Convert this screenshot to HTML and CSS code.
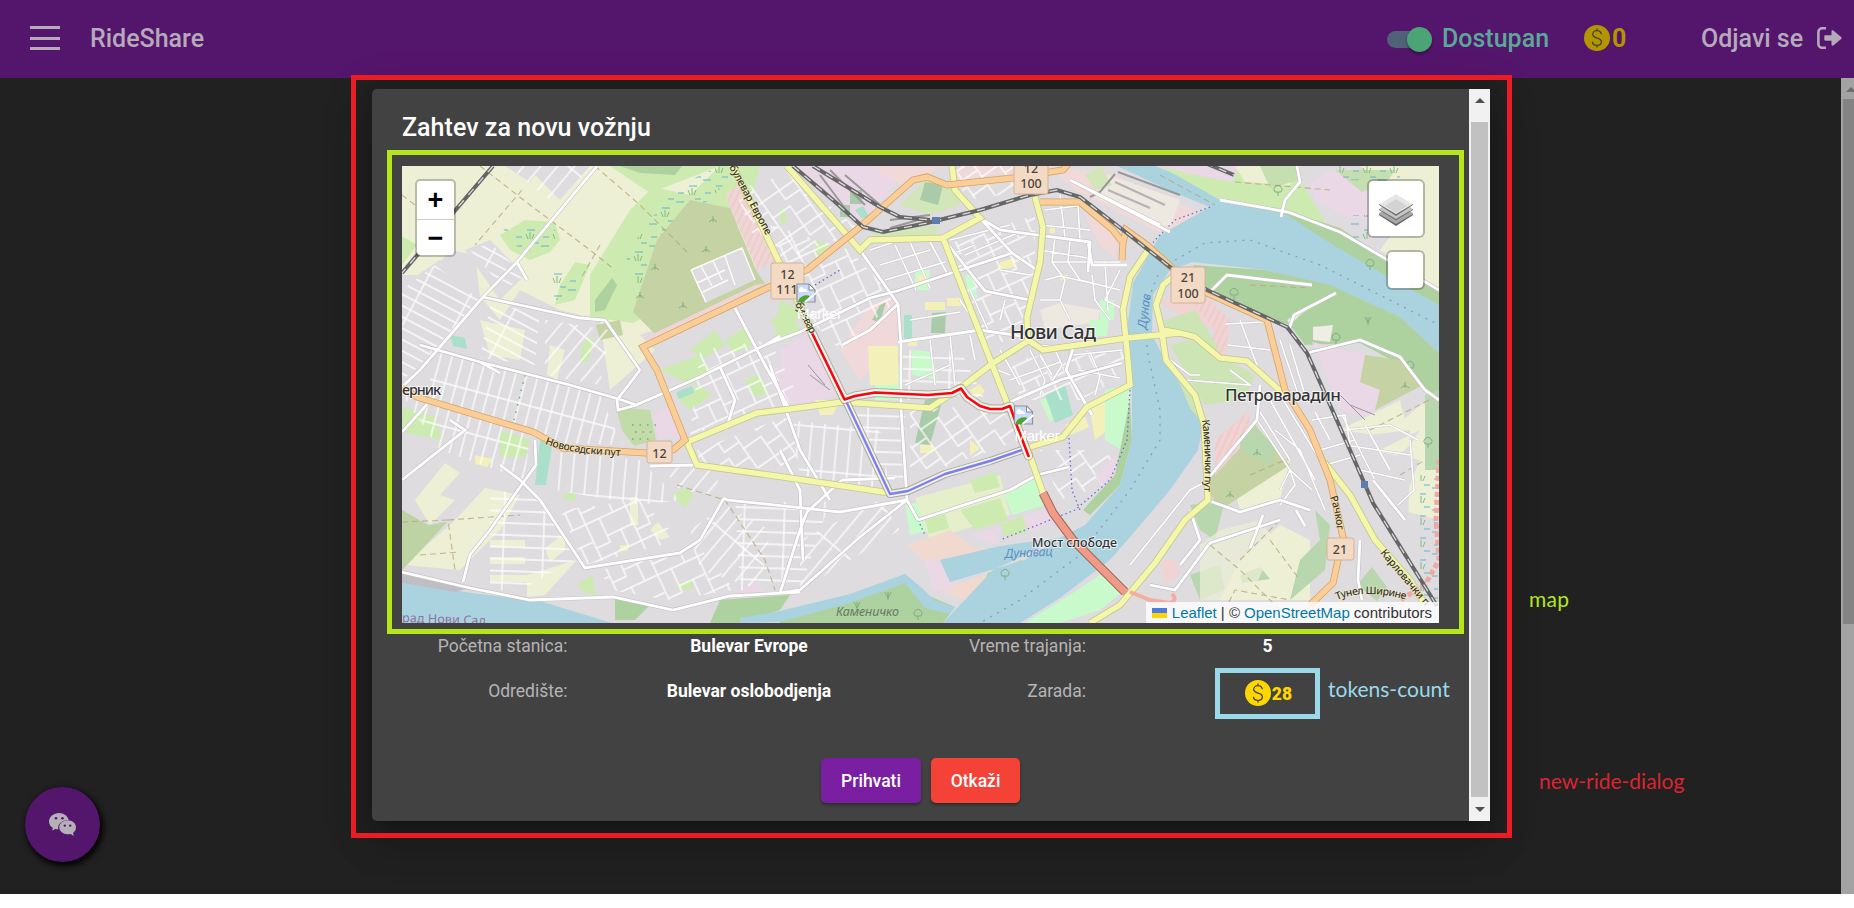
FILE: index.html
```html
<!DOCTYPE html>
<html lang="sr">
<head>
<meta charset="utf-8">
<title>RideShare</title>
<link rel="stylesheet" href="styles.css">
</head>
<body>
<div class="app">
  <header class="navbar">
    <div class="menu"><i></i><i></i><i></i></div>
    <div class="brand">RideShare</div>
    <div class="toggle"><span class="thumb"></span></div>
    <div class="status">Dostupan</div>
    <div class="tokens tokens-nav"><svg class="coin" viewBox="0 0 26 26"><use href="#coin"/></svg><b>0</b></div>
    <div class="logout">Odjavi se
      <svg class="logout-icon" viewBox="0 0 25 22"><path d="M9 1.3H5.2A3.8 3.8 0 0 0 1.4 5v12a3.8 3.8 0 0 0 3.8 3.8H9" fill="none" stroke="currentColor" stroke-width="2.6"/><path d="M8.5 8.2h6V4.4c0-1.2 1-1.5 1.8-.8l7.8 6.3c.7.6.7 1.5 0 2.1l-7.8 6.4c-.8.7-1.8.3-1.8-.8v-3.8h-6c-.8 0-1.2-.5-1.2-1.2V9.4c0-.7.4-1.2 1.2-1.2z" fill="currentColor"/></svg>
    </div>
  </header>
  <main class="page">
    <div class="chat"><svg viewBox="0 0 27 23"><path fill="currentColor" d="M10.3 0C4.600 0 0 3.800 0 8.400c0 2.700 1.500 5 3.900 6.500l-1 2.900 3.400-1.700c1 .3 1.900.4 3 .4C8.300 11.300 12.800 6.900 19.700 7 18.700 2.900 14.800 0 10.300 0z"/><path fill="currentColor" d="M27 14.300c0-3.800-3.800-7-8.300-7s-8.400 3.200-8.400 7 3.800 7 8.400 7c1 0 1.900-.2 2.900-.4l3.300 2-.9-2.900c1.800-1.300 3-3.300 3-5.700z"/><g class="eyes"><circle cx="7" cy="5.300" r="1.300"/><circle cx="13.500" cy="5.300" r="1.300"/><circle cx="15.800" cy="12.600" r="1.200"/><circle cx="21.200" cy="12.600" r="1.200"/></g></svg></div>
    <div class="scroll page-scroll"><span class="arrow up"></span><span class="bar"></span></div>
  </main>
</div>

<div class="overlay">
  <section class="dialog">
    <div class="content">
      <h2>Zahtev za novu vožnju</h2>
      <div class="map">
      <svg class="tiles" viewBox="402 166 1037 457">
        <defs>
          <g id="coin"><circle cx="13" cy="13" r="13" fill="currentColor"/><path class="dollar" d="M17.300 9.300c0-2.200-1.800-3.600-4.300-3.600S8.700 7.100 8.700 9.300c0 5 8.700 2.700 8.700 7.500 0 2.200-1.900 3.600-4.400 3.600s-4.500-1.400-4.500-3.700M13 3.500v2.200M13 20.400v2.200"/></g>
          <pattern id="g1" width="11" height="42" patternUnits="userSpaceOnUse" patternTransform="rotate(15)"><path d="M1 0V42M0 3H11" class="lane"/></pattern>
          <pattern id="g2" width="46" height="10" patternUnits="userSpaceOnUse" patternTransform="rotate(28)"><path d="M0 1H46M2 0V10" class="lane"/></pattern>
          <pattern id="g3" width="44" height="38" patternUnits="userSpaceOnUse" patternTransform="rotate(-25)"><path d="M0 1H44M1 0V38M16 1V20H44M31 20V38M0 27H16V20" class="lane"/></pattern>
          <pattern id="g4" width="13" height="44" patternUnits="userSpaceOnUse" patternTransform="rotate(5)"><path d="M1 0V44M0 2H13" class="lane"/></pattern>
          <pattern id="g5" width="40" height="12" patternUnits="userSpaceOnUse" patternTransform="rotate(2)"><path d="M0 1H40M2 0V12" class="lane"/></pattern>
          <pattern id="g6" width="39" height="43" patternUnits="userSpaceOnUse" patternTransform="rotate(-35)"><path d="M0 1H39M1 0V43M0 20H22V43M22 1V12H39M22 30H39" class="lane"/></pattern>
          <pattern id="g7" width="13" height="60" patternUnits="userSpaceOnUse" patternTransform="rotate(40)"><path d="M1 0V60M0 2H13" class="lane"/></pattern>
          <pattern id="hatch" width="6" height="6" patternUnits="userSpaceOnUse" patternTransform="rotate(25)"><path d="M1 0V6" stroke="#e9bcbc" stroke-width=".7"/></pattern>
          <pattern id="marsh" width="27" height="22" patternUnits="userSpaceOnUse"><path d="M1 4h8M14 10h8M3 17h6M20 1h6" stroke="#65b4d2" stroke-width="1.200"/><path d="M15 19l-2-5M17 19v-7M19 19l2-5" fill="none" stroke="#77b77b" stroke-width=".9"/></pattern>
          <g id="minor" fill="none">
            <path d="M597 166L517 262L483 297L420 370L402 387M483 297L520 305L580 318L605 320L640 370M517 262L527 280M420 345L480 362L570 385L622 400L636 405L700 377L720 367M480 362L500 373M720 367L735 400L726 430M735 308L765 365L790 410M720 367L765 345L800 332L870 298L897 291L1012 253M640 370L617 400L618 410L637 405M765 345L780 336M860 250L898 304L901 345V408L907 500L918 520M898 342L980 330L1027 337M980 218L1012 253L1040 272M980 218L1000 230L1090 242L1088 272M898 304L870 330L842 345M943 238L976 280L985 291L1030 300M1088 242L1092 265L1127 265M1010 402L1060 380L1122 363M1030 345L1073 349L1066 370L1092 415M918 520L1010 490L1037 475L1069 467M907 500L860 537L800 590L780 593M842 480L807 512L800 530L780 593M697 465L650 466M724 498L727 500L840 512L907 500M724 498L700 540L680 553L585 568L540 500L519 479L500 465M402 572L470 588L530 600L613 597L673 610L730 596L800 592M780 450L800 490L803 560M895 478L842 480M770 365L800 450L830 500"/>
            <path d="M535 440L536 465L520 487L490 530L470 555L463 582M402 432L440 390M402 480L465 430L450 420"/>
            <path d="M1070 180L1170 232M1070 180L1160 225M1220 200L1288 212L1340 232L1439 290M1281 217L1285 200L1300 182L1297 166M1288 332L1294 315L1336 293M1207 295L1227 275L1312 285M1307 353L1360 340L1400 357L1425 390L1439 400M1260 385L1257 420L1205 482M1190 510L1200 540L1180 565M1207 500L1240 512L1280 500L1310 510M1150 585L1175 590L1210 543L1280 520M1263 515L1250 548M1296 510L1305 526M1373 480L1405 520M1360 540L1358 580L1362 600"/>
          </g>
          <g id="streets" fill="none">
            <path d="M1130 565L1190 490L1205 482M1257 420L1290 470L1312 490M1410 440L1414 490L1398 505M1225 324L1264 322M1228 345L1270 350M1240 320L1258 368M1280 340L1300 400M1290 345L1305 395M1315 412L1330 440M1312 420L1345 415L1350 445M1345 430L1390 425L1418 440M1345 445L1410 455M1360 470L1405 480M1275 430L1300 450L1325 510M1280 490L1290 470L1295 485L1280 505M1260 412L1290 460M1170 360L1190 375L1200 375M1185 380L1250 385L1230 370M1270 400L1315 480M1280 395L1320 460M1320 450L1355 440M1325 465L1360 455M1342 415L1375 480M1365 425L1390 470"/>
            <path d="M1040 225L1090 230M1045 210L1085 205L1100 215M1060 195L1065 238M1078 205L1080 240M1040 250L1088 258M1055 237L1052 262L1065 280L1060 300M1070 240L1068 262L1080 280L1120 290M1052 262L1120 262M1045 280L1060 276L1100 285M1092 275L1095 300L1110 320M1040 300L1060 300L1070 320M1105 262L1108 310M1120 270L1105 300L1125 310M1040 355L1052 375M1055 350L1062 365L1050 385M1010 380L1060 362M1030 350L1045 380L1040 395M1073 355L1122 350M1078 370L1120 378M1090 352L1100 376L1095 395M1000 350L1020 385M985 365L1010 375"/>
            <path d="M870 250L900 240M880 265L930 250M885 280L945 262M892 294L955 270M910 242L930 288M895 245L916 290M930 242L948 275M950 255L975 245M960 300L980 330M910 320L960 312M930 340L935 385M950 335L955 385M970 335L975 360M905 385L950 365M1000 270L1030 275M1005 300L1000 320M970 290L988 330M950 240L1010 225M965 255L1020 232"/>
          </g>
          <g id="yellow" fill="none">
            <path d="M733 166L770 243L812 332L844 400M787 166L860 250L870 240L943 238L980 218L955 190L952 166M943 238L1007 403L1028 450L1043 493M1035 197L1043 227L1040 262L1027 317L1028 340L1043 350L1127 338L1180 333L1195 337L1220 358L1247 361L1285 395M1028 341L993 363L963 386L930 408L843 402L790 409L757 413L687 442L697 465L790 478L890 493M1030 447L1063 437L1087 407L1130 385L1127 350L1123 310L1130 277L1150 247M1180 333L1162 330L1156 305L1163 285L1175 275M1162 333L1166 360L1195 395L1204 425L1208 500L1185 520L1155 563L1120 605L1090 623M1324 462L1350 495L1375 540L1410 580L1425 605"/>
          </g>
          <g id="orange" fill="none"><path d="M402 388L417 397L533 432L563 448L647 453L673 450L685 440L657 370L643 347L763 290L807 270L860 227L913 180L927 177L947 185L1013 178L1063 170L1070 162M1040 202L1080 202L1113 230L1123 243L1122 260M1123 243L1126 230L1147 245L1180 275L1207 293L1267 320L1285 390L1310 430L1330 480L1343 537L1333 583L1310 605"/></g>
          <g id="rail" fill="none"><path d="M493 166L402 273M793 166L833 200L863 227L883 232L927 223L980 210L1030 195L1057 190L1080 197L1123 230L1170 267L1207 290L1287 327L1307 353L1350 450L1373 503L1437 606M813 166L880 207L900 217L930 220M1205 163L1234 175"/></g>
        </defs>
        <rect x="402" y="166" width="1037" height="457" fill="#dedcdf"/>
        <!-- farmland and woods, north-west -->
        <path fill="#edf0d5" d="M402 166H735L760 260L740 300L640 335L655 350L610 390L600 320L560 310L520 290L500 320L480 296L475 255L450 250L430 275L402 275z"/>
        <path fill="#dedcdf" d="M505 166H590L560 200L535 175L530 182zM465 250L490 240L525 275L500 300zM402 285L440 260L480 295L470 330L402 380z"/>
        <path fill="#cdebb0" d="M590 275L630 210L653 187L690 195L720 166H760L750 205L690 290L633 323L590 317zM500 235L525 220L555 222L560 240L550 252L530 260L510 250zM560 285L575 262L590 265L575 300L555 305zM610 166H720L650 193zM402 236L417 245L402 265z"/>
        <path fill="url(#marsh)" d="M625 255L665 200L690 180L720 166H740L710 200L690 210L665 265L640 290zM500 225H555V250H520zM550 270H580L575 300H552z"/>
        <path fill="#aed1a0" d="M620 166H682L675 175L640 173zM595 300L612 278L617 285L605 310L595 312z"/>
        <path fill="#c5d2a3" d="M690 200L730 208L757 272L766 285L655 334L633 312L657 240zM596 325L620 320L623 335L600 340z"/>
        <path fill="#dedcdf" d="M691 270L742 248L755 280L705 303z"/>
        <path class="lane" d="M691 270L742 248L755 280M691 270L706 302M701 266L712 286M713 261L722 280M697 283L725 270M703 292L728 280M725 256L735 285"/>
        <path fill="#efd5d5" d="M725 195L738 185L775 262L757 270zM655 333L755 285L768 283L640 345z"/>
        <path fill="url(#hatch)" d="M725 195L738 185L775 262L757 270z"/>
        <!-- industry and retail -->
        <path fill="#ead8e7" d="M795 166H905L880 205L860 225zM652 415L675 402L686 435L660 440zM780 350L805 335L843 395L790 405zM766 375L790 365L805 398L785 407z"/>
        <path fill="#f1d9d9" d="M870 166H945L927 174L900 185zM870 305L897 295V345L860 380L840 350zM1050 166L1115 175L1205 215L1170 238L1075 190zM960 166L1063 166L955 180zM1085 215L1105 225L1118 240L1115 258L1100 245z"/>
        <path fill="#ede8e0" d="M1108 175L1180 200L1170 228L1095 198zM1040 310L1060 303L1100 310L1098 322L1045 330z"/>
        <path fill="#d2e6b9" d="M900 205L925 180L955 187L960 205L930 215zM870 232L940 225L935 238L880 238zM1085 175L1100 166L1112 185L1095 190z"/>
        <path fill="#aacbaa" d="M925 182L943 185L938 205L920 200zM880 305L886 302L880 322L872 320zM932 313L946 312L945 333L931 333zM925 400L943 398L930 445L915 443zM850 190h12v14h-12zM840 205h10v12h-10z"/>
        <path fill="#c8facc" d="M915 270h15v20h-15zM965 275L972 275L978 300L968 292zM912 350L932 352L937 380L912 375zM875 365h25v35h-25zM1089 320h20l-2 16h-16zM1100 300h14v20h-14zM1040 400L1060 395L1065 410L1050 422zM1003 490L1040 477L1045 505L1012 515zM905 505L930 500L932 530L910 535z"/>
        <path fill="#f3f1b9" d="M868 346H898V385H870zM925 302h20v8h-20zM1000 262L1015 258V267L998 270zM815 400H840L833 415H820zM1090 410L1110 395L1125 390L1120 420L1095 440zM920 445h13v8h-13zM970 440l10 8-10 8zM918 275h10v10h-10zM947 298h14v8h-14zM908 340h9v6h-9zM1050 228h5v5h-5zM1060 275h8v5h-8zM970 390l10-6 5 8-10 6zM1065 425l20-8 4 10-18 8zM475 455l18 4-6 8-12-3zM620 545h8v6h-8z"/>
        <path fill="#cdebb0" d="M780 300L800 310L790 340L775 335zM690 350L715 330L725 345L705 358zM660 370L700 355L710 372L690 385zM770 320L790 308L800 330L785 340zM675 395L700 385L712 395L690 410zM725 340l20-12 10 16-20 10zM745 380l15-6 8 18-12 6zM780 205l8 15-8 5zM817 240l12 5-5 12-10-4z"/>
        <path fill="#aae0cb" d="M676 392l16-6 2 7-15 6zM450 335l15 3 2 11-14-3zM540 440H553L546 485H535zM855 210l8-4 6 10-7 3zM904 315h8v26h-8zM1045 395l20-10 8 30-18 8z"/>
        <path fill="#c2dba8" d="M616 407L650 410L656 440L634 446L622 430z"/>
        <path fill="#edf0d5" d="M415 500L445 463L460 473L440 495L455 500L430 525zM405 565L455 520L485 488L520 495L500 530L470 560L460 570zM527 575L577 560L545 595L527 597zM545 548L565 533L565 550L550 562zM630 497h8v28h-8zM650 530l8-8 12 15-10 3zM490 540h35v7h-35zM490 557h35v7h-35zM490 575h38v7h-38zM480 320l45 10-5 30-30-5zM550 345l15 5-8 30-10-5z"/>
        <path fill="#cdebb0" d="M402 407L435 417L442 440L402 432zM500 430L530 440L525 457H500zM672 495l15-8 6 8-8 13zM564 493h12v7h-12zM577 585l15-10 4 20-10-2zM677 585l15-5 1 8-12 3zM582 345l8-8 4 3-6 22-8 0z"/>
        <path fill="#bdd3a4" d="M402 510L428 525L447 522L410 562L402 570z"/>
        <path fill="#ead8e7" d="M738 590l20-8 5 10-22 10zM770 366l14 4v15z"/>
        <!-- street grids -->
        <path fill="url(#g1)" d="M430 350L480 362L600 395L622 445L560 443L430 398zM402 395L530 435L525 480L440 450z"/>
        <path fill="url(#g2)" d="M402 290L435 265L480 300L415 370L402 380zM490 305L540 312L535 365L480 358zM470 250L490 243L525 275L505 290z"/>
        <path fill="url(#g7)" d="M508 166H592L555 205zM545 320L610 330L600 385L545 375z"/>
        <path fill="url(#g4)" d="M555 452L640 460L680 500L640 505L555 490zM790 420L880 430L890 490L800 475z"/>
        <path fill="url(#g5)" d="M855 408H905V485H880zM900 350H960L985 400H905zM490 490L540 495L575 560L520 590L490 590zM735 502H830L800 590H740z"/>
        <path fill="url(#g3)" d="M770 225L850 250L897 300L840 350L800 310zM945 245L1035 215L1035 270L1020 330L990 350zM1010 360L1070 352L1125 350V375L1080 400L1020 400zM700 350L770 340L800 400L690 435zM560 510L640 500L680 540L585 565zM600 570L700 548L735 590L670 600L610 590z"/>
        <path fill="url(#g6)" d="M910 410L1000 405L1020 440L910 480zM697 450L790 415L800 470L700 465zM785 170L860 230L840 245L800 220zM955 166H1035V190L965 200zM1040 450H1110L1120 480L1060 500zM735 190L785 175L835 235L790 265L755 240z"/>
        <path fill="url(#g7)" d="M690 530L725 505L770 530L760 590L700 570zM660 465L720 470L715 495L680 490zM800 540L880 500L900 530L800 590z"/>
        <!-- parks south of the centre -->
        <path fill="#e5efca" d="M915 498L1000 475L1010 515L930 540z"/>
        <path fill="#cdebb0" d="M960 510L1000 498L1008 520L975 530zM925 520l20-6 4 14-20 6zM970 480l25-8 5 15-25 6zM1000 525l24-10 3 18-22 3z"/>
        <path fill="#f1d9d0" d="M908 545L950 530L975 548L1010 550L925 562zM940 590L985 575L990 585L965 600z"/>
        <path fill="#ead8e7" d="M925 560L980 557L950 590L933 590zM970 535L1002 527L995 545zM1023 516L1050 508L1053 523L1027 532zM1095 475L1115 455L1120 475L1105 490z"/>
        <path fill="#aed1a0" d="M780 612L850 600L905 578L920 592L955 607L943 623H780zM988 573L1022 560L1020 580H985z"/>
        <path fill="#c8facc" d="M1025 623L1065 598L1100 575L1125 590L1100 610L1060 623zM1105 390L1130 385V430L1122 450L1105 440z"/>
        <path fill="#aed1a0" d="M1130 400L1132 440L1120 485L1090 515L1083 510L1115 475zM720 600L790 595L780 610L740 623H710zM615 597L650 605L635 620H615z"/>
        <!-- water -->
        <path fill="#aad3df" d="M1117 166L1180 195L1210 207L1160 235L1133 283L1127 330L1132 385L1132 440L1120 485L1085 525L1040 548L993 570L943 623H1020L1060 598L1110 560L1130 537L1170 490L1198 450L1203 425L1190 400L1165 360L1152 335L1153 295L1170 270L1193 262L1265 270L1333 287L1400 317L1439 353V305L1400 283L1333 243L1287 213L1220 200L1190 180L1155 166zM402 583L480 594L540 601L612 623H402zM940 560L1000 546L1060 538L1025 560L950 582zM780 611L850 594L905 574L922 588L935 601L955 607L950 614L925 608L905 583L850 603L780 622L740 623V618z"/>
        <path fill="#bfbfc3" d="M402 573L470 588L455 592L402 583z"/>
        <!-- right bank -->
        <path fill="#cdebb0" d="M1160 166H1240L1300 180L1330 230L1439 288V305L1333 240L1287 213L1220 200z"/>
        <path fill="#aed1a0" d="M1218 198L1290 212L1340 228L1439 292V305L1390 278L1333 245L1287 215zM1193 265L1265 270L1330 285L1400 317L1439 353V410L1410 370L1360 343L1305 345L1290 325L1207 295z"/>
        <path fill="#ead8e7" d="M1160 166H1240L1232 182L1195 175zM1310 185L1330 170L1366 180L1368 220L1350 218L1315 200zM1312 342L1365 355L1360 382L1380 390L1372 420L1340 410z"/>
        <path fill="#edf0d5" d="M1360 166H1439V290L1380 250L1410 210zM1235 166H1300L1290 185L1245 182zM1220 600L1240 560L1280 525L1310 540V600zM1235 490L1260 475L1290 460L1280 500L1240 510zM1370 450L1420 405L1439 400V520L1400 510L1420 460zM1340 430L1400 400L1410 440z"/>
        <path fill="#c5dfb0" d="M1335 170h60l-8 12-25 10zM1260 166H1297L1300 180L1270 188z"/>
        <path fill="url(#marsh)" d="M1335 166H1400V182L1345 180zM1350 215H1368V240H1350zM1420 475H1438V605H1420z"/>
        <path fill="#c5d2a3" d="M1365 355L1400 360L1423 385L1375 410L1380 390L1360 382zM1205 485L1255 425L1290 465L1220 510z"/>
        <path fill="#dedcdf" d="M1227 320L1265 325L1275 380L1240 362L1228 350zM1110 570L1170 490L1200 455L1210 500L1185 545L1160 580L1130 570zM1260 390L1300 400L1325 470L1370 480L1410 445L1420 430L1360 460L1310 420L1290 410zM1330 440L1410 430L1408 540L1380 600L1340 590L1350 540z"/>
        <path fill="#f1d3d3" d="M1155 300L1205 295L1230 320L1225 360L1210 350L1215 330L1180 315zM1215 440L1250 410L1248 440L1215 475zM1160 560h15l5 15-15 10z"/>
        <path fill="url(#hatch)" d="M1190 300L1205 295L1230 320L1225 360L1210 350L1215 330zM1215 440L1250 410L1248 440L1215 475z"/>
        <path fill="#cde5b5" d="M1165 320L1195 310L1220 350L1165 330zM1170 345L1190 340L1255 375L1245 400L1205 405zM1170 360l25 30 5 30-10-12z"/>
        <path fill="#b9d7ae" d="M1240 435L1255 428L1275 445L1270 465L1240 450zM1425 395L1439 390V470H1425zM1190 505L1225 500L1215 540L1200 530zM1290 600L1300 560L1320 540L1315 510L1330 525L1325 570zM1190 575l30-10 5 25-25 10zM1240 575l20-8 10 12-28 4zM1357 585l15-18 15 20-10 14z"/>
        <path fill="#f0ece6" d="M1313 327l20-2-3 17-17-2zM1287 320L1330 295L1300 315L1290 325z"/>
        <path fill="#edf0d5" d="M1200 545l20-15 40-10 15 20-25 60h-50z" opacity=".7"/>
        <!-- field tracks, ferry lines, trees -->
        <g class="track"><path d="M402 195L415 205M480 166L530 205L590 250L615 270M595 166L640 205L690 255M522 190L475 245M600 245L580 280M402 522L448 520L455 570M448 520L520 515M420 555L460 552M1160 175L1215 205M1235 182L1330 190M1210 545L1240 570L1280 610M1240 560L1280 520M1270 540L1300 580M1250 475L1290 458M1370 430L1439 395M1250 285L1310 288M1400 475L1425 460M677 485L725 500L765 560L775 590M1220 620L1235 590L1290 600"/></g>
        <g class="ferry"><path d="M1175 260L1205 243L1250 240L1320 265L1380 295L1439 325M1158 275L1148 300L1147 350L1160 410L1160 440L1130 490L1080 555L1020 600L980 623"/></g>
        <g class="cycle"><path d="M1210 207L1175 220L1155 240L1133 270L1125 310M1130 390L1127 440L1110 480L1075 510L1000 540M1069 438L1072 490L1080 510M918 520L925 535M815 285L840 270"/></g>
        <g fill="none" stroke="#7ca97e" stroke-width=".9"><path d="M713 222v-6m-4 6l4-3 4 3M655 270v-6m-4 6l4-3 4 3M706 252v-6m-4 6l4-3 4 3M640 298v-6m-4 6l4-3 4 3M683 308v-6m-4 6l4-3 4 3M1234 302v-6m-3-1a4 4 0 1 1 6 0zM1368 325v-8m-3 0l3 6 3-6M1336 344v-4m-3 0a4 4 0 1 1 6 0zM1410 372v-4m-3 0a4 4 0 1 1 6 0zM1278 196v-4m-3 0a4 4 0 1 1 6 0zM1370 270v-4m-3 0a4 4 0 1 1 6 0zM857 610v-8m-3 0l3 6 3-6M888 600v-8m-3 0l3 6 3-6M918 620v-4m-3 0a4 4 0 1 1 6 0zM1005 580v-4m-3 0a4 4 0 1 1 6 0zM1257 455v-6m-4 6l4-3 4 3M1230 497v-6m-4 6l4-3 4 3M1405 388v-6m-4 6l4-3 4 3M1428 448v-4m-3 0a4 4 0 1 1 6 0z"/></g>
        <path d="M632 425h26M635 432h22M632 439h22M525 375L514 420" stroke="#68b36b" stroke-width="1.500" stroke-dasharray="1.500 6"/>
        <path d="M1350 405L1375 415M1340 395L1365 420M808 365L825 385M810 375L830 390" stroke="#999" stroke-width="1"/>
        <path d="M820 175L850 215M830 170L865 205M845 175L880 205M890 220L930 215M890 228L925 218M1115 174L1100 192L1090 197M1118 172L1180 195" stroke="#999" stroke-width="2" fill="none"/>
        <path d="M1115 182L1165 205M1108 190L1150 208" stroke="#b5b2b2" stroke-width="2" fill="none"/>
        <!-- roads -->
        <use href="#streets" stroke="#c9c6c9" stroke-width="2.500"/>
        <use href="#streets" stroke="#fff" stroke-width="1.600"/>
        <use href="#minor" stroke="#c4c1c4" stroke-width="4"/>
        <use href="#minor" stroke="#fff" stroke-width="2.800"/>
        <use href="#yellow" stroke="#c3c78c" stroke-width="7"/>
        <use href="#yellow" stroke="#f4f6aa" stroke-width="5.400"/>
        <use href="#orange" stroke="#d6a368" stroke-width="7"/>
        <use href="#orange" stroke="#fbce98" stroke-width="5.400"/>
        <path d="M1043 493L1053 513L1073 540L1125 592" fill="none" stroke="#a2675a" stroke-width="9"/>
        <path d="M1043 493L1053 513L1073 540L1126 593" fill="none" stroke="#ef9b87" stroke-width="7"/>
        <path d="M1439 460L1436 520L1439 560L1425 585L1400 600" fill="none" stroke="#f0a8a0" stroke-width="5" stroke-dasharray="5 3"/>
        <path d="M1130 592L1150 600L1170 603Q1178 600 1172 594" fill="none" stroke="#f4ada1" stroke-width="4"/>
        <use href="#rail" stroke="#666" stroke-width="4"/>
        <use href="#rail" stroke="#ddd" stroke-width="1.300" stroke-dasharray="8 7"/>
        <path fill="#5f7cae" d="M932 217h8v7h-8zM1361 481h7v7h-7z"/>
        <!-- alternative and chosen route -->
        <g fill="none" stroke-linejoin="round" stroke-linecap="round">
          <path d="M846 401L890 494L908 491L945 474L990 461L1022 450" stroke="#8b8f70" stroke-width="8" opacity=".65"/>
          <path d="M846 401L890 494L908 491L945 474L990 461L1022 450" stroke="#f3f1ef" stroke-width="6"/>
          <path d="M846 401L890 494L908 491L945 474L990 461L1022 450" stroke="#7d80eb" stroke-width="2.400"/>
          <path d="M812 333L844.500 399.500L855 396L875 392.500L928 395L952 393L961 388.500L967 397L980 406L990 409H1002L1010 406L1017 426L1028.500 456" stroke="#8b8f70" stroke-width="9" opacity=".6"/>
          <path d="M812 333L844.500 399.500L855 396L875 392.500L928 395L952 393L961 388.500L967 397L980 406L990 409H1002L1010 406L1017 426L1028.500 456" stroke="#f7f3f0" stroke-width="7"/>
          <path d="M812 333L844.500 399.500L855 396L875 392.500L928 395L952 393L961 388.500L967 397L980 406L990 409H1002L1010 406L1017 426L1028.500 456" stroke="#f5050d" stroke-width="2.600"/>
        </g>
        <!-- road shields -->
        <g class="shield"><rect x="771" y="263" width="33" height="36" rx="2"/><rect x="1014" y="155" width="34" height="39" rx="2"/><rect x="1171" y="267" width="34" height="36" rx="2"/><rect x="647" y="441" width="25" height="22" rx="2"/><rect x="1327" y="538" width="27" height="22" rx="2"/></g>
        <g class="shield-text"><text x="787.500" y="279">12</text><text x="787" y="293.500">111</text><text x="1031" y="173">12</text><text x="1031" y="188">100</text><text x="1188" y="282">21</text><text x="1188" y="297.500">100</text><text x="659.500" y="457.500">12</text><text x="1340" y="554">21</text></g>
        <!-- place names -->
        <g class="place"><text x="1010" y="339" font-size="19.500" textLength="86">Нови Сад</text><text x="1225" y="401" font-size="17" textLength="116">Петроварадин</text><text x="402" y="395" font-size="14.500" textLength="39">ерник</text><text x="1032" y="546.500" font-size="12.500" textLength="85">Мост слободе</text></g>
        <g class="water-name"><text transform="translate(1146 329) rotate(-82)" textLength="35">Дунав</text><text x="1005" y="558" transform="rotate(-3 1005 558)" textLength="48">Дунавац</text></g>
        <text class="water-name nature" x="836" y="616" textLength="63">Каменичко</text>
        <text class="admin" x="402" y="622" textLength="84" transform="rotate(2 402 622)">рад Нови Сад</text>
        <path id="n1" d="M545 444Q570 454 622 456" fill="none"/><path id="n2" d="M729 167L768 239" fill="none"/><path id="n3" d="M1202 420Q1207 460 1203 502" fill="none"/><path id="n4" d="M1380 553L1428 610" fill="none"/><path id="n5" d="M1330 497Q1338 520 1337 540" fill="none"/><path id="n6" d="M1337 600Q1365 588 1407 600" fill="none"/>
        <g class="road-name"><text><textPath href="#n1" textLength="77">Новосадски пут</textPath></text><text><textPath href="#n2" textLength="78">булевар Европе</textPath></text><text><textPath href="#n3" textLength="72">Каменички пут</textPath></text><text><textPath href="#n4" textLength="70">Карловачки п</textPath></text><text><textPath href="#n5" textLength="34">Рачког</textPath></text><text><textPath href="#n6" textLength="70">Тунел Ширине</textPath></text><text transform="translate(795 304) rotate(63)" textLength="34">булевар</text></g>
        <g id="marker"><path fill="#c9dbfa" stroke="#919191" stroke-width="1.200" d="M797 284h12l6 6v12h-18z"/><path fill="#fff" d="M799 289c2-3 4-2 5 0 3 0 4 2 3 3h-8z"/><path fill="#4ca52f" d="M798 302c1-6 8-8 12-6l-5 6z"/><path stroke="#fff" stroke-width="2" d="M805 302l11-9"/><path fill="#fff" stroke="#888" d="M809 284v6h6z"/><text class="alt" x="797" y="319" textLength="45">Marker</text></g>
        <use href="#marker" x="217.500" y="122"/>
      </svg>
      <div class="zoom"><span>+</span><span>−</span></div>
      <div class="layers"><svg viewBox="0 0 34 34"><path fill="#a9a9a9" d="M0 23l17 10 17-10v-2L17 12 0 21z"/><path fill="#666" d="M0 22l17 10 17-10v1L17 34 0 23z"/><path fill="#c5c5c5" d="M0 17l17 10 17-10L17 6z"/><path fill="#777" d="M0 17l17 10 17-10v1L17 28.500 0 18z"/><path fill="#e6e6e6" d="M0 12.500L17 2l17 10.500L17 23z"/><path fill="#d3d3d3" d="M6 14L17 7l11 7-11 7z"/><path fill="#777" d="M0 12l17 10 17-10v1L17 24 0 13z"/></svg></div>
      <div class="blank-control"></div>
      <div class="credit"><svg viewBox="0 0 15 10"><path fill="#4c7be1" d="M0 0h15v5H0z"/><path fill="#ffd500" d="M0 5h15v5H0z"/></svg><a>Leaflet</a> | © <a>OpenStreetMap</a> contributors</div>
      </div>
      <div class="details">
        <span class="label">Početna stanica:</span><b class="value">Bulevar Evrope</b><span class="label">Vreme trajanja:</span><b class="value">5</b>
        <span class="label">Odredište:</span><b class="value">Bulevar oslobodjenja</b><span class="label">Zarada:</span><b class="value"><span class="tokens tokens-ride"><svg class="coin" viewBox="0 0 26 26"><use href="#coin"/></svg><b>28</b></span></b>
      </div>
      <div class="actions"><button class="accept">Prihvati</button><button class="reject">Otkaži</button></div>
    </div>
    <div class="scroll dialog-scroll"><span class="arrow up"></span><span class="bar"></span><span class="arrow down"></span></div>
  </section>
</div>

<div class="frame frame-dialog"></div>
<div class="frame frame-map"></div>
<div class="frame frame-tokens"></div>
<div class="note note-map">map</div>
<div class="note note-tokens">tokens-count</div>
<div class="note note-dialog">new-ride-dialog</div>
</body>
</html>
```
FILE: styles.css
```css
* { box-sizing: border-box; }
body { margin: 0; height: 908px; overflow: hidden; background: #fff; font-family: Roboto, "Liberation Sans", sans-serif; position: relative; }
.app { height: 894px; display: flex; flex-direction: column; background: #212121; }
.navbar { height: 78px; flex: none; display: flex; align-items: center; padding: 0 12px 0 30px; background: #54156c; color: #b5aab9; font-size: 25px; font-weight: 500; line-height: 78px; }
.menu { width: 30px; height: 24px; display: flex; flex-direction: column; justify-content: space-between; margin-top: -2px; }
.menu i { height: 3px; background: #b5aab9; }
.brand { margin: 0 auto 0 30px; }
.toggle { width: 45px; height: 17px; border-radius: 9px; display: flex; align-items: center; justify-content: flex-end; background: linear-gradient(90deg, #50627a 42px, transparent 42px); }
.thumb { width: 25px; height: 25px; border-radius: 50%; background: #4aa476; box-shadow: 0 2px 3px rgba(0,0,0,.35); }
.status { color: #5ba898; margin-left: 10px; width: 109px; }
.tokens { display: flex; align-items: center; }
.coin { width: 26px; height: 26px; display: block; }
.dollar { fill: none; stroke: #424242; stroke-width: 1.3; }
.tokens-nav { margin-left: 33px; width: 117px; color: #b39500; }
.tokens-nav .coin { margin-top: -2px; }
.tokens-nav b { margin-left: 2px; font-weight: 700; }
.tokens-nav .dollar { stroke: #54156c; }
.logout { display: flex; align-items: center; justify-content: space-between; width: 141px; }
.logout-icon { width: 25px; height: 22px; margin-top: -2px; }
.page { flex: 1; display: flex; justify-content: space-between; min-height: 0; }
.chat { margin: auto 0 32px 25px; width: 75px; height: 75px; border-radius: 50%; background: #54156c; color: #b5b0b8; display: flex; align-items: center; justify-content: center; box-shadow: 2px 3px 6px 1px #000; }
.chat svg { width: 27px; height: 23px; }
.eyes { fill: #54156c; }
.scroll { display: flex; flex-direction: column; align-items: center; }
.arrow { width: 0; height: 0; border: 5px solid transparent; }
.up { border-top: 0; border-bottom-color: #505050; }
.down { border-bottom: 0; border-top-color: #505050; }
.page-scroll { width: 13px; background: #a3a3a3; padding-top: 9px; align-items: flex-end; overflow: hidden; }
.page-scroll .bar { width: 11px; height: 525px; margin-top: 7px; background: #838383; }
.page-scroll .up { border-bottom-color: #6b6b6b; margin-right: -2px; }
.overlay { position: absolute; inset: 0 0 14px; overflow: hidden; display: flex; align-items: flex-start; padding: 89px 0 0 372px; }
.dialog { width: 1118px; height: 732px; display: flex; background: #424242; border-radius: 5px 0 0 5px; color: #fff; box-shadow: 0 11px 15px -7px rgba(0,0,0,.2), 0 24px 38px 3px rgba(0,0,0,.14), 0 9px 46px 8px rgba(0,0,0,.12); }
.content { width: 1097px; padding: 20px 30px 0; }
.dialog-scroll { width: 21px; padding: 9px 0; background: #f1f1f1; justify-content: space-between; }
.dialog-scroll .bar { width: 17px; height: 675px; margin-top: 9px; background: #c1c1c1; }
h2 { margin: 0 0 21px; height: 36px; font-size: 25px; line-height: 37px; font-weight: 500; letter-spacing: .03px; }
.map { width: 1037px; height: 457px; position: relative; overflow: hidden; }
.tiles { width: 1037px; height: 457px; display: block; font-family: "Noto Sans", sans-serif; }
.lane { fill: none; stroke: #fff; stroke-width: 1.4; opacity: .9; }
.track { fill: none; stroke: #b9a675; stroke-width: 1.1; stroke-dasharray: 6 4; opacity: .8; }
.ferry { fill: none; stroke: #8aa0bb; stroke-width: 1.4; stroke-dasharray: 2 6; }
.cycle { fill: none; stroke: #6a6ad8; stroke-width: 1.3; stroke-dasharray: 1.5 3; }
.shield rect { fill: #f3dac4; stroke: #d3b298; stroke-width: 1; }
.shield-text { font-size: 12.5px; text-anchor: middle; fill: #4c443d; font-weight: 500; }
.place { fill: #333; stroke: #fff; stroke-opacity: .7; stroke-width: 2px; paint-order: stroke; font-weight: 500; }
.water-name { fill: #5f8fc4; font-size: 12.5px; font-style: italic; }
.nature { fill: #667a62; }
.admin { fill: #8f72a3; font-size: 12.5px; }
.road-name { fill: #3b3630; font-size: 10.5px; font-weight: 500; stroke: #f5f1c0; stroke-opacity: .6; stroke-width: 1.5px; paint-order: stroke; }
.alt { fill: #fff; font-family: "Liberation Sans", sans-serif; font-size: 15px; }
.zoom { position: absolute; left: 13px; top: 13px; width: 41px; height: 78px; border: 2px solid rgba(0,0,0,.22); background-clip: padding-box; border-radius: 5px; display: flex; flex-direction: column; background-color: #fff; }
.zoom span { flex: 1; font: bold 27px/38px "Liberation Sans", sans-serif; text-align: center; color: #000; }
.zoom span + span { border-top: 1px solid #ccc; line-height: 36px; }
.layers, .blank-control { position: absolute; right: 14px; background: #fff; background-clip: padding-box; border: 2px solid rgba(0,0,0,.24); border-radius: 6px; }
.layers { top: 13px; width: 58px; height: 59px; display: flex; align-items: center; justify-content: center; }
.layers svg { width: 34px; height: 34px; }
.blank-control { top: 84px; width: 39px; height: 40px; }
.credit { position: absolute; right: 0; bottom: 0; height: 21px; width: 293px; padding: 0 7px 0 0; background: rgba(255,255,255,.8); color: #333; font: 15px/21px "Liberation Sans", sans-serif; letter-spacing: -.02px; white-space: nowrap; text-align: right; }
.credit svg { width: 15px; height: 10px; margin-right: 5px; }
.credit a { color: #0078a8; }
.details { display: grid; grid-template-columns: 175.5px 343px 175.5px 343px; grid-auto-rows: 45px; align-items: center; font-size: 17.5px; line-height: 24px; }
.label { text-align: right; padding-right: 10px; color: #b5b5b5; }
.value { text-align: center; font-weight: 700; }
.tokens-ride { justify-content: center; color: #ffd600; padding: 4px 0 0 2px; }
.tokens-ride b { margin-left: 1px; padding-top: 2px; }
.actions { display: flex; justify-content: center; gap: 10px; margin-top: 45px; }
.actions button { height: 45px; padding: 0; border: 0; border-radius: 5px; color: #fff; font: 500 17.5px Roboto, sans-serif; box-shadow: 0 2px 3px rgba(0,0,0,.35); }
.accept { width: 100px; background: #7b1fa2; }
.reject { width: 89px; background: #f44336; }
.frame { position: absolute; border: 5px solid; }
.frame-dialog { left: 351px; top: 75px; width: 1161px; height: 763px; border-color: #ec1c24; }
.frame-map { left: 387px; top: 150px; width: 1077px; height: 484px; border-color: #b5e61d; }
.frame-tokens { left: 1215px; top: 668px; width: 105px; height: 51px; border-color: #99d9ea; }
.note { position: absolute; font: 21px/26px Lato, sans-serif; white-space: nowrap; }
.note-map { left: 1529px; top: 586px; color: #b5e61d; letter-spacing: .3px; }
.note-tokens { left: 1328px; top: 676px; color: #99d9ea; }
.note-dialog { left: 1539px; top: 768px; color: #dc2430; }
```
